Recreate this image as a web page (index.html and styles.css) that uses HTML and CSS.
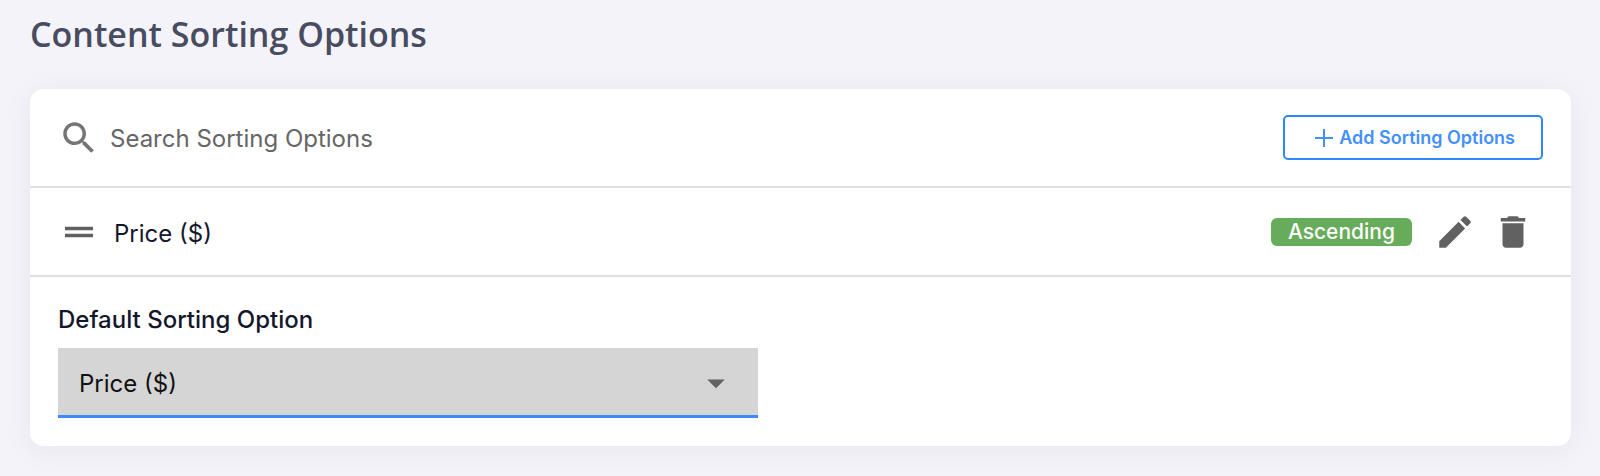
FILE: index.html
```html
<!DOCTYPE html>
<html lang="en">
<head>
    <meta charset="UTF-8">
    <meta name="viewport" content="width=device-width, initial-scale=1.0">
    <title>Content Sorting Options</title>
    <link rel="stylesheet" href="styles.css">
</head>
<body>
    <h1 class="page-title">Content Sorting Options</h1>

    <main class="card">
        <!-- Search and add -->
        <div class="toolbar">
            <label class="search">
                <svg class="icon icon-search" viewBox="0 0 24 24" aria-hidden="true"><path d="M15.5 14h-.79l-.28-.27C15.41 12.59 16 11.11 16 9.5 16 5.91 13.09 3 9.5 3S3 5.91 3 9.5 5.91 16 9.5 16c1.61 0 3.09-.59 4.23-1.57l.27.28v.79l5 4.99L20.49 19l-4.99-5zm-6 0C7.01 14 5 11.99 5 9.5S7.01 5 9.5 5 14 7.01 14 9.5 11.99 14 9.5 14z"/></svg>
                <input type="text" class="search-input" placeholder="Search Sorting Options" aria-label="Search Sorting Options">
            </label>
            <button type="button" class="add-btn">
                <svg class="icon-plus" viewBox="0 0 18 18" aria-hidden="true"><path d="M9 0v18M0 9h18"/></svg>
                Add Sorting Options
            </button>
        </div>

        <!-- Sorting options -->
        <ul class="options">
            <li class="option">
                <svg class="icon" viewBox="0 0 24 24" aria-hidden="true"><path d="M20 9H4v2h16V9zM4 15h16v-2H4v2z"/></svg>
                <span class="option-name">Price ($)</span>
                <span class="badge">Ascending</span>
                <div class="actions">
                    <button type="button" class="icon-btn" aria-label="Edit">
                        <svg class="icon" viewBox="0 0 24 24"><path d="M3 17.25V21h3.75L17.81 9.94l-3.75-3.75L3 17.25zM20.71 7.04c.39-.39.39-1.02 0-1.41l-2.34-2.34a.9959.9959 0 0 0-1.41 0l-1.83 1.83 3.75 3.75 1.83-1.83z"/></svg>
                    </button>
                    <button type="button" class="icon-btn" aria-label="Delete">
                        <svg class="icon" viewBox="0 0 24 24"><path d="M6 19c0 1.1.9 2 2 2h8c1.1 0 2-.9 2-2V7H6v12zM19 4h-3.5l-1-1h-5l-1 1H5v2h14V4z"/></svg>
                    </button>
                </div>
            </li>
        </ul>

        <!-- Default option -->
        <div class="default-option">
            <label class="default-label" for="default-sort">Default Sorting Option</label>
            <div class="select-box">
                <select id="default-sort" class="select">
                    <option>Price ($)</option>
                </select>
                <svg class="icon select-arrow" viewBox="0 0 24 24" aria-hidden="true"><path d="M7 10l5 5 5-5z"/></svg>
            </div>
        </div>
    </main>
</body>
</html>
```
FILE: styles.css
```css
* {
    margin: 0;
    padding: 0;
    box-sizing: border-box;
}

body {
    font-family: Inter, "Liberation Sans", sans-serif;
    font-size: 24px;
    color: #14172b;
    background-color: #f4f3f9;
    padding: 11px 29px 30px 30px;
}

.page-title {
    font-family: "Open Sans", "Noto Sans", sans-serif;
    font-size: 34px;
    font-weight: 600;
    line-height: 46px;
    color: #484c60;
    margin-bottom: 32px;
}

.card {
    background: #fff;
    border-radius: 14px;
    box-shadow: 0 4px 32px rgba(40, 40, 80, 0.06);
}

.icon {
    display: block;
    flex: none;
    width: 42px;
    height: 42px;
    fill: #616161;
}

.icon-search {
    fill: #757575;
}

/* Toolbar */
.toolbar {
    display: flex;
    align-items: center;
    justify-content: space-between;
    padding: 26px 28px;
    border-bottom: 2px solid #e0e0e0;
}

.search {
    display: flex;
    align-items: center;
    flex: 1;
    gap: 10px;
}

.search-input {
    flex: 1;
    padding-top: 2px;
    border: none;
    outline: none;
    background: none;
    font: inherit;
    color: #14172b;
}

.search-input::placeholder {
    color: #666;
    opacity: 1;
}

.add-btn {
    display: flex;
    align-items: center;
    justify-content: center;
    gap: 6px;
    height: 45px;
    padding: 0 26px 0 30px;
    border: 2px solid #2f86fb;
    border-radius: 5px;
    background: #fff;
    color: #4490fb;
    font-family: inherit;
    font-size: 18px;
    font-weight: 600;
    cursor: pointer;
}

.icon-plus {
    width: 18px;
    height: 18px;
    fill: none;
    stroke: #4490fb;
    stroke-width: 2;
}

/* Option rows */
.options {
    list-style: none;
}

.option {
    display: flex;
    align-items: center;
    padding: 23px 37px 22px 28px;
    border-bottom: 2px solid #e0e0e0;
}

.option-name {
    flex: 1;
    margin-left: 14px;
    padding-top: 2px;
}

.badge {
    padding: 0 17px;
    border-radius: 6px;
    background: #67ac5b;
    color: #fff;
    font-size: 21px;
    font-weight: 500;
    line-height: 28px;
}

.actions {
    display: flex;
    gap: 16px;
    margin-left: 22px;
}

.icon-btn {
    border: none;
    background: none;
    cursor: pointer;
}

/* Default option */
.default-option {
    padding: 28px;
}

.default-label {
    display: block;
    font-weight: 500;
    line-height: 30px;
    margin-bottom: 13px;
}

.select-box {
    position: relative;
    max-width: 700px;
}

.select {
    display: block;
    width: 100%;
    height: 70px;
    padding: 4px 60px 0 21px;
    appearance: none;
    border: none;
    border-bottom: 3px solid #3d8bf5;
    border-radius: 0;
    outline: none;
    background: #d5d5d5;
    color: #111;
    font: inherit;
}

.select-arrow {
    position: absolute;
    top: 14px;
    right: 21px;
    pointer-events: none;
}
```
